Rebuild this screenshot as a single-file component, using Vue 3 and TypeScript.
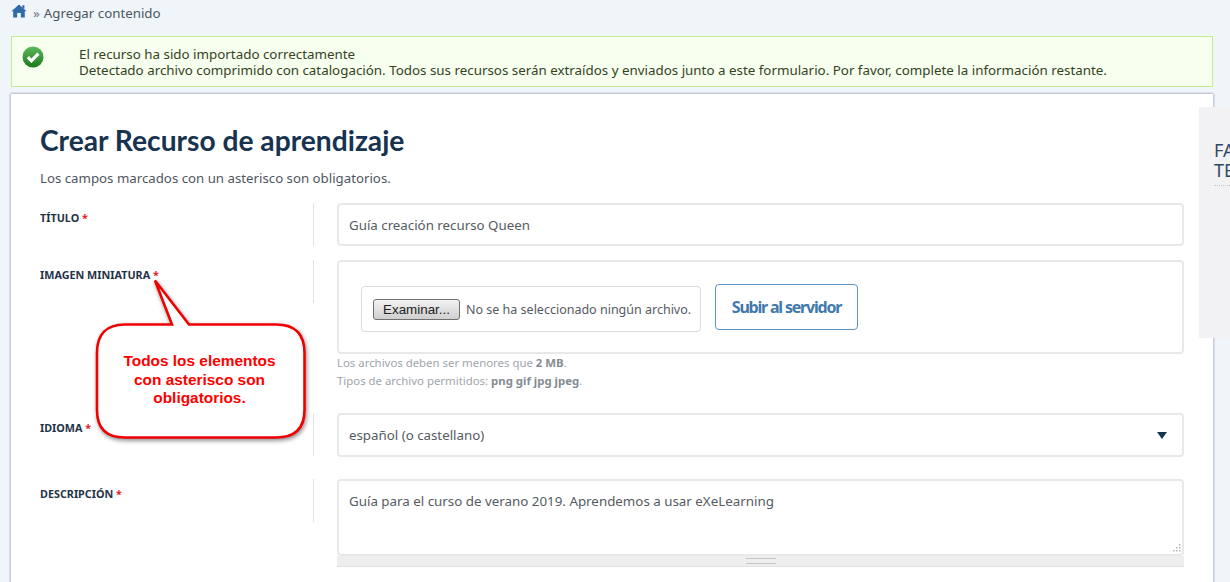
<script setup lang="ts">
const fileName = 'No se ha seleccionado ningún archivo.'
</script>

<template>
  <div class="page">
    <nav class="crumbs">
      <svg class="home" width="16" height="14" viewBox="0 0 16 14" aria-hidden="true">
        <path d="M8 0.5 L15.6 7.2 L13.8 7.2 L13.8 13.5 L9.8 13.5 L9.8 9 L6.2 9 L6.2 13.5 L2.2 13.5 L2.2 7.2 L0.4 7.2 Z" fill="#2f6ca8" />
        <rect x="11.4" y="1.2" width="2" height="3.4" fill="#2f6ca8" />
      </svg>
      <span class="sep">»</span>
      <span>Agregar contenido</span>
    </nav>

    <div class="message">
      <svg class="ok" width="22" height="22" viewBox="0 0 22 22" aria-hidden="true">
        <defs>
          <linearGradient id="okg" x1="0" y1="0" x2="0" y2="1">
            <stop offset="0" stop-color="#5cb85c" />
            <stop offset="1" stop-color="#1c7a1c" />
          </linearGradient>
        </defs>
        <circle cx="11" cy="11" r="10.5" fill="url(#okg)" />
        <path d="M5.8 11.2 L9.4 14.8 L16.4 7.6" fill="none" stroke="#fff" stroke-width="3.2" />
      </svg>
      <div class="message-text">
        <div>El recurso ha sido importado correctamente</div>
        <div>Detectado archivo comprimido con catalogación. Todos sus recursos serán extraídos y enviados junto a este formulario. Por favor, complete la información restante.</div>
      </div>
    </div>

    <main class="card">
      <h1>Crear Recurso de aprendizaje</h1>
      <p class="intro">Los campos marcados con un asterisco son obligatorios.</p>

      <div class="row row-title">
        <label class="label">TÍTULO <span class="req">*</span></label>
        <div class="field">
          <div class="box input">Guía creación recurso Queen</div>
        </div>
      </div>

      <div class="row row-image">
        <label class="label">IMAGEN MINIATURA <span class="req">*</span></label>
        <div class="field">
          <div class="box upload">
            <div class="file">
              <span class="browse">Examinar...</span>
              <span class="file-name">{{ fileName }}</span>
            </div>
            <span class="send">Subir al servidor</span>
          </div>
          <div class="help">
            <div>Los archivos deben ser menores que <b>2 MB</b>.</div>
            <div>Tipos de archivo permitidos: <b>png gif jpg jpeg</b>.</div>
          </div>
        </div>
      </div>

      <div class="row row-lang">
        <label class="label">IDIOMA <span class="req">*</span></label>
        <div class="field">
          <div class="box input select">
            <span>español (o castellano)</span>
            <i class="caret"></i>
          </div>
        </div>
      </div>

      <div class="row row-desc">
        <label class="label">DESCRIPCIÓN <span class="req">*</span></label>
        <div class="field">
          <div class="box area">
            Guía para el curso de verano 2019. Aprendemos a usar eXeLearning
            <svg class="resize" width="9" height="9" viewBox="0 0 9 9" aria-hidden="true">
              <g fill="#b5b5b5">
                <rect x="7" y="0" width="1.5" height="1.5" />
                <rect x="4" y="3" width="1.5" height="1.5" />
                <rect x="7" y="3" width="1.5" height="1.5" />
                <rect x="1" y="6" width="1.5" height="1.5" />
                <rect x="4" y="6" width="1.5" height="1.5" />
                <rect x="7" y="6" width="1.5" height="1.5" />
              </g>
            </svg>
          </div>
          <div class="grip"><i></i></div>
        </div>
      </div>
    </main>

    <aside class="side">
      <div class="side-title">FAVORITOS<br />TEMAS</div>
    </aside>

    <div class="callout">
      <svg width="222" height="176" viewBox="0 0 222 176" aria-hidden="true">
        <path class="callout-shape" d="M30 54.5 H77 L60 10.5 L94 54.5 H181 Q209.5 54.5 209.5 83 V140 Q209.5 167.5 181 167.5 H30 Q2 167.5 2 140 V83 Q2 54.5 30 54.5 Z" />
      </svg>
      <div class="callout-text">Todos los elementos<br />con asterisco son<br />obligatorios.</div>
    </div>
  </div>
</template>

<style>
html, body { margin: 0; background: #f0f5fa; overflow: hidden; }
</style>

<style scoped>
.page {
  position: relative;
  width: 1230px;
  height: 582px;
  overflow: hidden;
  background: #f0f5fa;
  font-family: "Noto Sans", "Open Sans", sans-serif;
  color: #4a4f55;
  padding: 0 0 0 11px;
  box-sizing: border-box;
}
.crumbs {
  height: 36px;
  display: flex;
  align-items: flex-start;
  gap: 6px;
  font-size: 13.3px;
  line-height: 26px;
  color: #4c5560;
}
.home { margin-top: 4px; }
.sep { color: #6d7680; margin-right: -2px; }
.message {
  width: 1202px;
  height: 51px;
  box-sizing: border-box;
  border: 1px solid #c5ec95;
  background: #f7ffee;
  display: flex;
  padding: 9px 0 0 10px;
  gap: 35px;
  color: #33421f;
  font-size: 13.37px;
  line-height: 15.5px;
}
.ok { flex: none; }
.message-text { white-space: nowrap; margin-top: 1px; }
.card {
  width: 1202px;
  height: 520px;
  margin-top: 7px;
  box-sizing: border-box;
  background: #fff;
  padding: 28px 29px 0;
  box-shadow: -1px 0 2px #b9bfcc, 1px 0 2px #b9bfcc, 0 -1px 2px #c9cdd8;
}
h1 {
  margin: 0;
  font-family: Lato, "Noto Sans", sans-serif;
  font-size: 28.2px;
  line-height: 36px;
  font-weight: 700;
  color: #17334f;
}
.intro {
  margin: 11px 0 0;
  font-size: 13.25px;
  line-height: 18px;
  color: #4f5660;
}
.row {
  display: grid;
  grid-template-columns: 273px 1fr;
  position: relative;
}
.row::before {
  content: "";
  position: absolute;
  left: 273px;
  top: 0;
  width: 1px;
  height: 43px;
  background: #e2e2e2;
}
.row-title { margin-top: 16px; }
.row-image { margin-top: 14px; }
.row-lang { margin-top: 23px; }
.row-desc { margin-top: 22px; }
.label {
  font-size: 10.8px;
  font-weight: 700;
  line-height: 16px;
  color: #1f3348;
  padding-top: 7px;
}
.req { color: #e02020; }
.field { margin-left: 24px; width: 847px; }
.box {
  box-sizing: border-box;
  border: 2px solid #e8e8e8;
  border-radius: 4px;
  background: #fff;
  font-size: 13.35px;
  color: #555b62;
}
.input {
  height: 43px;
  line-height: 41px;
  padding: 0 10px;
  font-size: 13.3px;
}
.select {
  display: flex;
  justify-content: space-between;
  align-items: center;
  height: 44px;
  padding: 1px 15px 0 10px;
}
.caret {
  width: 0;
  height: 0;
  border-left: 5.5px solid transparent;
  border-right: 5.5px solid transparent;
  border-top: 7px solid #17334f;
}
.upload {
  height: 94px;
  display: flex;
  align-items: flex-start;
  gap: 13px;
  padding-left: 22px;
}
.file {
  box-sizing: border-box;
  width: 340px;
  height: 46px;
  margin-top: 24px;
  border: 1px solid #dcdcdc;
  border-radius: 4px;
  display: flex;
  align-items: center;
  padding-left: 11px;
  gap: 6px;
  font-size: 12.5px;
  white-space: nowrap;
}
.browse {
  box-sizing: border-box;
  width: 87px;
  height: 21px;
  border: 1px solid #707070;
  border-radius: 3px;
  background: linear-gradient(#f2f2f2, #cfcfcf);
  color: #222;
  font: 13.4px/20px "Liberation Sans", sans-serif;
  text-align: center;
}
.send {
  box-sizing: border-box;
  width: 143px;
  height: 46px;
  margin-top: 22px;
  margin-left: 1px;
  border: 1px solid #5b93c4;
  border-radius: 4px;
  text-align: center;
  line-height: 44px;
  font-size: 16px;
  font-weight: 700;
  color: #3f79ad;
  letter-spacing: -1.2px;
}
.help {
  font-size: 11.4px;
  line-height: 18px;
  color: #a0a5ab;
  margin-top: 0;
}
.help b { color: #868c93; }
.area {
  position: relative;
  height: 77px;
  padding: 10px 10px;
  line-height: 20px;
}
.resize { position: absolute; right: 1px; bottom: 1px; }
.grip {
  height: 11px;
  background: #eeeeee;
  border-bottom: 1px solid #e2e2e2;
  display: flex;
  justify-content: center;
  align-items: center;
  box-sizing: border-box;
}
.grip i {
  width: 30px;
  height: 4px;
  border-top: 1px solid #c4c4c4;
  border-bottom: 1px solid #c4c4c4;
}
.side {
  position: absolute;
  left: 1199px;
  top: 107px;
  width: 31px;
  height: 231px;
  background: #f2f2f4;
  overflow: hidden;
  box-sizing: border-box;
  padding: 33px 0 0 15px;
}
.side-title {
  font-size: 18px;
  line-height: 20px;
  color: #2f4a66;
  white-space: nowrap;
  width: 200px;
  padding-bottom: 5px;
  border-bottom: 1px dotted #c8c8c8;
}
.callout {
  position: absolute;
  left: 95px;
  top: 270px;
  width: 222px;
  height: 176px;
}
.callout svg {
  display: block;
  filter: drop-shadow(1.5px 2px 2px rgba(0, 0, 0, 0.45));
}
.callout-shape { fill: #fff; stroke: #f00000; stroke-width: 2.6; stroke-linejoin: miter; }
.callout-text {
  position: absolute;
  left: 1px;
  top: 82px;
  width: 207px;
  text-align: center;
  font-family: "Liberation Sans", sans-serif;
  font-size: 15.4px;
  font-weight: 700;
  line-height: 18.5px;
  color: #ff0000;
}
</style>
